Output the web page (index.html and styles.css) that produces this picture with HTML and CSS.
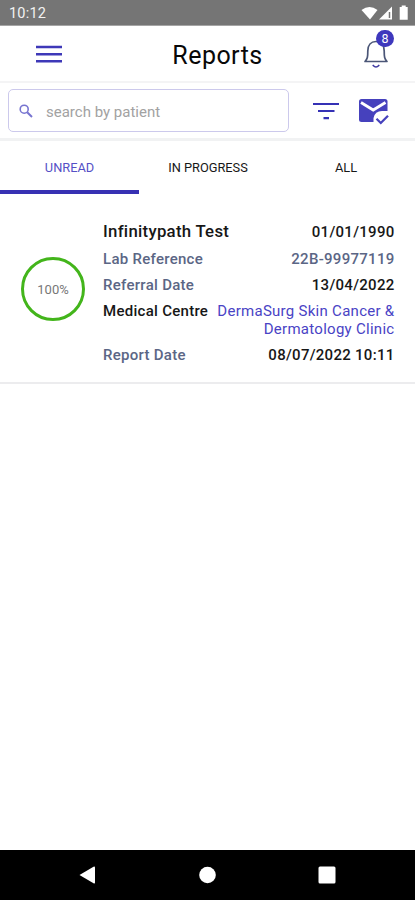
FILE: index.html
```html
<!DOCTYPE html>
<html lang="en">
<head>
<meta charset="utf-8">
<title>Reports</title>
<link rel="stylesheet" href="styles.css">
</head>
<body>
<div class="status">
  <span class="clock">10:12</span>
  <svg class="status-icons" width="50" height="18" viewBox="0 0 50 18" fill="#fff">
    <path d="M.500 5Q8.500-1 16.500 5L9 14.500Z"/>
    <path d="M31 1.500v13H18Z"/><path d="M28.500 7v6" stroke="#757575" stroke-width="1.500"/>
    <path d="M40.700 2v-1.500h4v1.500h2v12.700h-8v-12.700Z"/>
  </svg>
</div>
<header class="header">
  <svg class="menu" width="26" height="20" viewBox="0 0 26 20" stroke="#3e38b8" stroke-width="2.500"><path d="M0 3h26M0 10.200h26M0 17.300h26"/></svg>
  <h1 class="title">Reports</h1>
  <div class="bell">
    <svg width="26" height="32" viewBox="0 0 26 32" fill="none" stroke="#4b5677" stroke-width="1.700" stroke-linejoin="round" stroke-linecap="round">
      <path d="M2 23.500C4.500 21 4.800 19 4.800 13C4.800 7 8 3.500 13 3.500S21.200 7 21.200 13C21.200 19 21.500 21 24 23.500Z"/>
      <path d="M10.200 27.500q2.800 3 5.600 0" stroke="#3e38a0"/>
    </svg>
    <span class="badge">8</span>
  </div>
</header>
<div class="toolbar">
  <div class="search">
    <svg width="14" height="14" viewBox="0 0 14 14" fill="none" stroke="#7774d0" stroke-width="1.600"><circle cx="5.200" cy="5.200" r="4"/><path d="M8.200 8.200l4.800 4.800" stroke-width="2"/></svg>
    <span>search by patient</span>
  </div>
  <svg class="filter" width="26" height="18" viewBox="0 0 26 18" stroke="#3531b5" stroke-width="2.200"><path d="M0 2h26M5 9h16.500M10.500 16.200h5.500"/></svg>
  <svg class="mail" width="32" height="28" viewBox="0 0 32 28">
    <rect x="1" y="2" width="28.500" height="23" rx="2.500" fill="#4641bd"/>
    <path d="M3 5.500L15.200 13L27.500 5.500" fill="none" stroke="#fff" stroke-width="2.800"/>
    <path d="M15.500 26V21Q17 14 24 14H31V28H15.500Z" fill="#fff"/>
    <path d="M18.500 21.800l4.300 4.200l7.200-7.200" fill="none" stroke="#4641bd" stroke-width="2.300"/>
  </svg>
</div>
<nav class="tabs">
  <div class="tab active"><span>UNREAD</span></div>
  <div class="tab"><span>IN PROGRESS</span></div>
  <div class="tab"><span>ALL</span></div>
</nav>
<main class="content">
  <article class="card">
    <div class="ring">100%</div>
    <div class="rows">
      <div class="row first"><span>Infinitypath Test</span><span class="dob">01/01/1990</span></div>
      <div class="row"><span class="muted">Lab Reference</span><span class="muted ref">22B-99977119</span></div>
      <div class="row"><span class="muted">Referral Date</span><span>13/04/2022</span></div>
      <div class="row centre"><span>Medical Centre</span><span class="clinic">DermaSurg Skin Cancer &amp;<br>Dermatology Clinic</span></div>
      <div class="row"><span class="muted">Report Date</span><span>08/07/2022 10:11</span></div>
    </div>
  </article>
</main>
<footer class="navbar">
  <svg width="17" height="18" viewBox="0 0 17 18" fill="#fff"><path d="M.5 9L14.500.800Q16 0 16 1.500V16.500Q16 18 14.500 17.200Z"/></svg>
  <svg width="18" height="18" viewBox="0 0 18 18" fill="#fff"><circle cx="9.500" cy="9" r="8.300"/></svg>
  <svg width="18" height="18" viewBox="0 0 18 18" fill="#fff"><rect x=".5" y=".5" width="17" height="17" rx="1.500"/></svg>
</footer>
</body>
</html>
```

FILE: styles.css
```css
* { box-sizing: border-box; }
body {
  margin: 0;
  height: 900px;
  display: flex;
  flex-direction: column;
  overflow: hidden;
  background: #fff;
  color: #171717;
  font-family: Roboto, "Liberation Sans", sans-serif;
}
svg { display: block; flex: none; }
.status {
  height: 26px;
  flex: none;
  display: flex;
  justify-content: space-between;
  padding: 5px 4px 0 9px;
  background: #757575;
  border-bottom: 1px solid #a5a5a5;
}
.clock { font-size: 14.500px; line-height: 18px; letter-spacing: .2px; color: #f2f2f2; }
.header {
  height: 57px;
  flex: none;
  display: grid;
  grid-template-columns: 98px 1fr 98px;
  align-items: center;
  border-bottom: 2px solid #f4f4f5;
}
.menu { margin-left: 36px; }
.title {
  margin: 3px 0 0 0;
  padding-left: 20px;
  text-align: center;
  font-size: 25px;
  font-weight: 400;
  letter-spacing: .45px;
  color: #080808;
}
.bell { position: relative; width: 26px; margin-left: 46px; }
.badge {
  position: absolute;
  left: 13px;
  top: -8px;
  width: 18px;
  height: 17px;
  border-radius: 9px;
  background: #3e38bd;
  color: #fff;
  font-size: 12.500px;
  line-height: 18px;
  text-align: center;
}
.toolbar {
  height: 58px;
  flex: none;
  display: flex;
  align-items: flex-start;
  padding: 6px 0 0 8px;
  border-bottom: 3px solid #f1f2f3;
}
.search {
  width: 281px;
  height: 43px;
  display: flex;
  align-items: center;
  gap: 13px;
  padding-left: 10px;
  border: 1px solid #ccc9ec;
  border-radius: 5px;
  color: #a2a2a2;
  font-size: 15px;
}
.search span { padding-top: 2px; }
.filter { margin: 13px 0 0 24px; }
.mail { margin: 8px 0 0 19px; }
.tabs { height: 53px; flex: none; display: grid; grid-template-columns: 139px 1fr 1fr; }
.tab {
  display: flex;
  justify-content: center;
  padding-top: 19px;
  border-bottom: 4px solid transparent;
  font-size: 12.800px;
  line-height: 16px;
}
.active { color: #5550c6; border-color: #3731b3; }
.content { flex: 1; }
.card {
  height: 190px;
  display: flex;
  padding: 0 20.500px 0 21px;
  border-bottom: 2px solid #ececee;
}
.ring {
  width: 64px;
  height: 64px;
  flex: none;
  margin-top: 63px;
  border: 3.500px solid #43b51b;
  border-radius: 50%;
  text-align: center;
  font-size: 13px;
  line-height: 59px;
  color: #777;
}
.rows {
  flex: 1;
  margin-left: 18px;
  padding-top: 25px;
  font-size: 15px;
  font-weight: 500;
  line-height: 18px;
  letter-spacing: .28px;
}
.row { display: flex; justify-content: space-between; height: 26px; padding-top: 4px; white-space: nowrap; }
.first { height: 28px; padding-top: 3px; }
.first span:first-child { font-size: 16.800px; letter-spacing: .27px; }
.first .dob { padding-top: 1px; }
.row:nth-child(2) { padding-top: 3px; height: 25px; }
.centre { height: 44px; }
.muted { color: #5b6685; }
.clinic { text-align: right; color: #4943c5; font-weight: 400; }
.navbar {
  height: 50px;
  flex: none;
  display: flex;
  justify-content: space-between;
  align-items: center;
  padding: 0 79px;
  background: #000;
}
```
